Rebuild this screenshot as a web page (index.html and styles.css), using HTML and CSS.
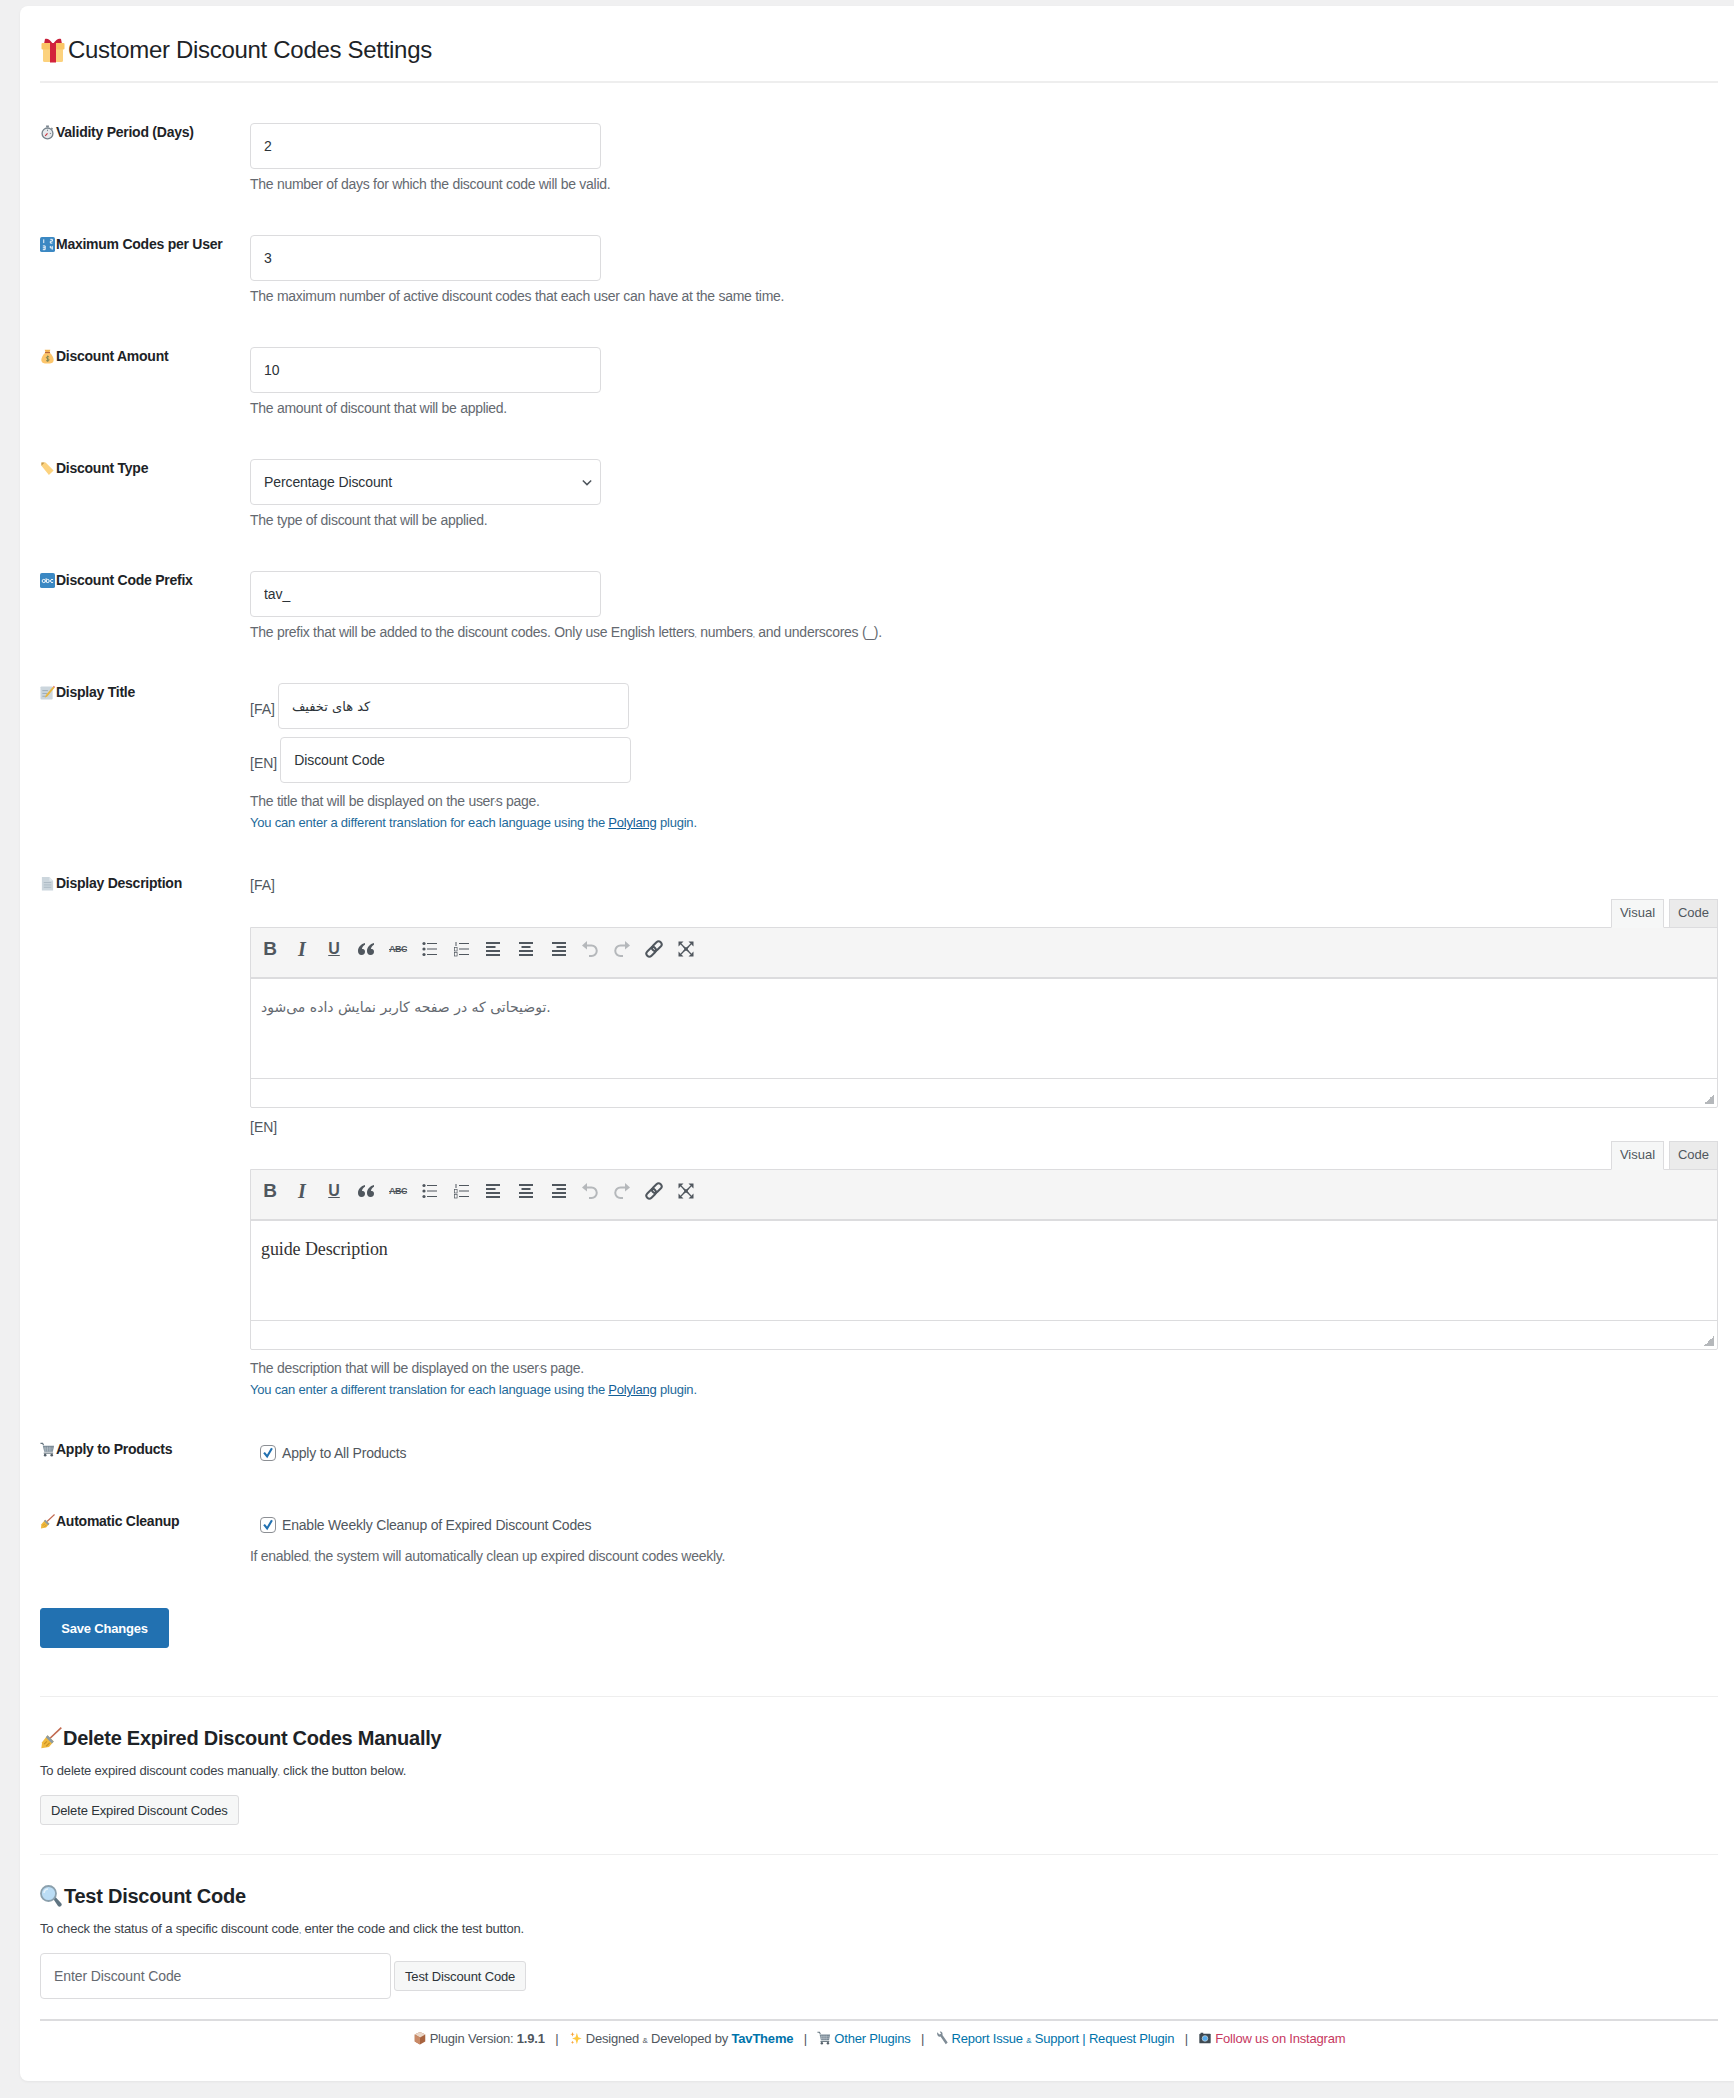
FILE: index.html
```html
<!DOCTYPE html>
<html lang="en">
<head>
  <meta charset="UTF-8" />
  <title>Customer Discount Codes Settings</title>
  <link rel="stylesheet" href="styles.css">
</head>
<body>
  <!-- icon sprite -->
  <svg class="sprite" xmlns="http://www.w3.org/2000/svg">
    <symbol id="i-gift" viewBox="0 0 24 26">
      <path d="M12 7C9 2 6 1 4 2L3 7zM12 7c3-5 6-6 8-5l1 5z" fill="#c8203a"/>
      <rect x="2" y="11" width="20" height="14" rx="1.5" fill="#fcd27e"/>
      <rect x="0.5" y="6" width="23" height="6.500" rx="1" fill="#fbc565"/>
      <rect x="9" y="6" width="6" height="19.500" fill="#d3233c"/>
    </symbol>
    <symbol id="i-watch" viewBox="0 0 16 16">
      <rect x="6.500" y="0.500" width="3" height="2" fill="#7c8790"/>
      <path d="M12 3l1.500 1.500" stroke="#7c8790" stroke-width="1.300"/>
      <circle cx="8" cy="9" r="5.800" fill="#e6e9ec" stroke="#77838c" stroke-width="1.400"/>
      <path d="M8 9 5.500 11.500" stroke="#c8323c" stroke-width="1.200"/>
      <path d="M8 5v1.500M11.800 9h-1.300" stroke="#77838c"/>
    </symbol>
    <symbol id="i-nums" viewBox="0 0 16 16">
      <rect width="16" height="16" rx="2" fill="#3b88c3"/>
      <path d="M4 2.500v4M11 2.500h2.200v2h-2.200v2h2.200M3 9.500h2.500v4H3M5.500 11.500H3M11 9.500v2.200h2.500M13 9.500v4" stroke="#fff" fill="none" stroke-width="1"/>
    </symbol>
    <symbol id="i-bag" viewBox="0 0 16 16">
      <path d="M5.500 4C2.500 7 1 10 1.500 12.500 2 15 4 15.500 8 15.500s6-.5 6.500-3C15 10 13.500 7 10.500 4z" fill="#fcc56b"/>
      <path d="M5 .800h6L10 4H6z" fill="#f2b252"/>
      <rect x="5.300" y="3.200" width="5.400" height="1.200" fill="#b9683e"/>
      <path d="M9.800 8.500C8.800 7.600 6.700 8 6.800 9.300c.1 1.400 3 .9 3 2.300 0 1.300-2.300 1.500-3.400.6M8.200 7v6.500" stroke="#6f7d4e" fill="none" stroke-width=".900"/>
    </symbol>
    <symbol id="i-tag" viewBox="0 0 16 16">
      <path d="M1.500 5V1.500H6l8.500 8.500-5 5z" fill="#fcd27e"/>
      <path d="M1.500 5 5 1.500H1.500z" fill="#c79a4c"/>
    </symbol>
    <symbol id="i-abc" viewBox="0 0 16 16">
      <rect width="16" height="16" rx="2" fill="#3b88c3"/>
      <circle cx="4" cy="8.500" r="1.700" fill="none" stroke="#fff" stroke-width="1"/>
      <circle cx="8.200" cy="8.500" r="1.700" fill="none" stroke="#fff" stroke-width="1"/>
      <path d="M6.500 5.500v4.500M14 7.200a1.700 1.700 0 1 0 0 2.600" stroke="#fff" fill="none" stroke-width="1"/>
    </symbol>
    <symbol id="i-memo" viewBox="0 0 16 16">
      <rect x="0.500" y="1.500" width="13" height="14" rx="1" fill="#ccd6dd"/>
      <path d="M2.500 6h6M2.500 9h5M2.500 12h5" stroke="#99aab5"/>
      <path d="M14 1.500 6.500 10.500 5 13.500 8 12 15.500 3z" fill="#e8b63f"/>
      <path d="M14 1.500l1.500 1.500 .5-.8-1.300-1.400z" fill="#dd5a6a"/>
    </symbol>
    <symbol id="i-page" viewBox="0 0 16 16">
      <path d="M2 1h8l4 4v10.500H2z" fill="#ccd6dd"/>
      <path d="M10 1l4 4h-4z" fill="#e1e8ed"/>
      <path d="M4 7h8M4 9.500h8M4 12h8" stroke="#aab8c2"/>
    </symbol>
    <symbol id="i-cart" viewBox="0 0 16 16">
      <path d="M.5 1.500h2.300l1 2" stroke="#66757f" stroke-width="1.200" fill="none"/>
      <path d="M3 4h12l-1.300 6.500H4.500z" fill="#7a8a96"/>
      <path d="M5.500 5v5M8 5v5M10.500 5v5M4 6.500h10M4.500 8.500h9" stroke="#c3ccd3" stroke-width=".600"/>
      <rect x="4" y="11.300" width="10" height="1.200" fill="#66757f"/>
      <circle cx="5.500" cy="14" r="1.400" fill="#55606a"/>
      <circle cx="12.500" cy="14" r="1.400" fill="#55606a"/>
    </symbol>
    <symbol id="i-broom" viewBox="0 0 16 16">
      <path d="M15.500.5 7.500 8" stroke="#c1694f" stroke-width="1.200"/>
      <path d="M5.500 6 10 10.500 6.500 14.500 1 15.500 1.500 11z" fill="#f0b93c"/>
      <path d="M5.500 6 10 10.500 8.700 12 4.200 7.500z" fill="#8a9aa5"/>
      <path d="M3 12.500 5 10.500M4.500 14 7 11.500" stroke="#c98f22" stroke-width=".800"/>
    </symbol>
    <symbol id="i-search" viewBox="0 0 22 22">
      <path d="M13 13.500 15 11.500 21 18a2 2 0 0 1-3 3z" fill="#5f7481"/>
      <circle cx="8.500" cy="8.500" r="7.500" fill="#bbddf5" stroke="#8ba0ad" stroke-width="1.800"/>
      <path d="M4 8a4.500 4.500 0 0 1 4-4" stroke="#e6f3fb" stroke-width="1.500" fill="none"/>
    </symbol>
    <symbol id="i-box" viewBox="0 0 14 16">
      <path d="M7 1l6 3v8l-6 3.500L1 12V4z" fill="#a8633f"/>
      <path d="M7 1l6 3-6 3.500L1 4z" fill="#ead7c8"/>
      <path d="M1 4l6 3.500v8L1 12z" fill="#c98a67"/>
    </symbol>
    <symbol id="i-spark" viewBox="0 0 14 16">
      <path d="M8 2l1.500 5 4 1.500-4 1.500L8 15 6.500 10l-4-1.500 4-1.500z" fill="#ffc93f"/>
      <path d="M3 1l.7 2 1.800.7-1.800.7L3 6.500l-.7-2.100L.5 3.700l1.800-.7zM3 11l.5 1.400 1.300.6-1.300.5L3 15l-.5-1.500L1.200 13l1.300-.6z" fill="#f7a23b"/>
    </symbol>
    <symbol id="i-wrench" viewBox="0 0 14 16">
      <path d="M1.500 1.500 4 4 6 3 4.500.8C6.500 0 8.200 2 7.500 4.500l6 8.500-2.200 2-6-8.700C3 7.500.8 4.500 1.500 1.500z" fill="#7f8c96"/>
    </symbol>
    <symbol id="i-camera" viewBox="0 0 14 16">
      <rect x="0.500" y="3" width="13" height="11" rx="1" fill="#3f4a52"/>
      <rect x="2" y="2" width="3" height="2" fill="#3f4a52"/>
      <circle cx="7" cy="8.500" r="3.200" fill="#55acee" stroke="#cfd8dd" stroke-width=".800"/>
    </symbol>

    <symbol id="e-quote" viewBox="0 0 20 20"><path d="M9 4C5 5 2 8 2 12c0 2 1 4 3.500 4S9 14.500 9 12.500 7.500 10 6 10c0-2 1.500-3.500 3-4.300zM18 4c-4 1-7 4-7 8 0 2 1 4 3.500 4s3.500-1.500 3.500-3.500S16.500 10 15 10c0-2 1.500-3.500 3-4.300z" fill="#50575e"/></symbol>
    <symbol id="e-ul" viewBox="0 0 20 20"><g fill="#50575e"><circle cx="4" cy="4.500" r="1.600"/><circle cx="4" cy="10" r="1.600"/><circle cx="4" cy="15.500" r="1.600"/><rect x="7" y="4" width="10" height="1"/><rect x="7" y="9.500" width="10" height="1"/><rect x="7" y="15" width="10" height="1"/></g></symbol>
    <symbol id="e-ol" viewBox="0 0 20 20"><g fill="#50575e"><rect x="3.500" y="3" width="1" height="4"/><rect x="2.500" y="8.500" width="2.600" height="3.500" fill="none" stroke="#50575e" stroke-width=".700"/><rect x="2.500" y="13.500" width="2.600" height="3.500" fill="none" stroke="#50575e" stroke-width=".700"/><rect x="7" y="4" width="10" height="1"/><rect x="7" y="9.500" width="10" height="1"/><rect x="7" y="15" width="10" height="1"/></g></symbol>
    <symbol id="e-left" viewBox="0 0 20 20"><g fill="#50575e"><rect x="2" y="3" width="14" height="2"/><rect x="2" y="7" width="9.500" height="2"/><rect x="2" y="11" width="14" height="2"/><rect x="2" y="15" width="14" height="2"/></g></symbol>
    <symbol id="e-center" viewBox="0 0 20 20"><g fill="#50575e"><rect x="3" y="3" width="14" height="2"/><rect x="5.500" y="7" width="9" height="2"/><rect x="3" y="11" width="14" height="2"/><rect x="3" y="15" width="14" height="2"/></g></symbol>
    <symbol id="e-right" viewBox="0 0 20 20"><g fill="#50575e"><rect x="4" y="3" width="14" height="2"/><rect x="8.500" y="7" width="9.500" height="2"/><rect x="4" y="11" width="14" height="2"/><rect x="4" y="15" width="14" height="2"/></g></symbol>
    <symbol id="e-undo" viewBox="0 0 20 20"><path d="M7 2 2 6.500 7 10.500z" fill="#b5b8bb"/><path d="M6 6.500h5.500a5 5 0 0 1 0 10.500H9" fill="none" stroke="#b5b8bb" stroke-width="2"/></symbol>
    <symbol id="e-redo" viewBox="0 0 20 20"><path d="M13 2l5 4.500-5 4z" fill="#b5b8bb"/><path d="M14 6.500H8.500a5 5 0 0 0 0 10.500H11" fill="none" stroke="#b5b8bb" stroke-width="2"/></symbol>
    <symbol id="e-link" viewBox="0 0 20 20"><g transform="rotate(-45 10 10)" fill="none" stroke="#50575e" stroke-width="2"><rect x="0.500" y="7" width="11" height="6" rx="3"/><rect x="8.500" y="7" width="11" height="6" rx="3"/></g></symbol>
    <symbol id="e-full" viewBox="0 0 20 20"><path d="M2.500 2.500h5l-5 5zM17.500 2.500v5l-5-5zM2.500 17.500v-5l5 5zM17.500 17.500h-5l5-5z" fill="#50575e"/><path d="M5 5l10 10M15 5 5 15" stroke="#50575e" stroke-width="1.300"/><path d="M6.500 7 10 8.500 13.500 7 11.500 10l2 3L10 11.500 6.500 13l2-3z" fill="#50575e"/></symbol>
  </svg>

  <div class="card">
    <h1 class="page-title"><svg class="ico-title"><use href="#i-gift"/></svg>Customer Discount Codes Settings</h1>

    <form>
      <div class="row">
        <label class="row-label"><svg class="ico"><use href="#i-watch"/></svg>Validity Period (Days)</label>
        <div>
          <input class="field" type="text" value="2">
          <p class="desc">The number of days for which the discount code will be valid.</p>
        </div>
      </div>

      <div class="row">
        <label class="row-label"><svg class="ico"><use href="#i-nums"/></svg>Maximum Codes per User</label>
        <div>
          <input class="field" type="text" value="3">
          <p class="desc">The maximum number of active discount codes that each user can have at the same time.</p>
        </div>
      </div>

      <div class="row">
        <label class="row-label"><svg class="ico"><use href="#i-bag"/></svg>Discount Amount</label>
        <div>
          <input class="field" type="text" value="10">
          <p class="desc">The amount of discount that will be applied.</p>
        </div>
      </div>

      <div class="row">
        <label class="row-label"><svg class="ico"><use href="#i-tag"/></svg>Discount Type</label>
        <div>
          <select class="field select">
            <option>Percentage Discount</option>
          </select>
          <p class="desc">The type of discount that will be applied.</p>
        </div>
      </div>

      <div class="row">
        <label class="row-label"><svg class="ico"><use href="#i-abc"/></svg>Discount Code Prefix</label>
        <div>
          <input class="field" type="text" value="tav_">
          <p class="desc">The prefix that will be added to the discount codes. Only use English letters<span class="tiny">,</span> numbers<span class="tiny">,</span> and underscores (_).</p>
        </div>
      </div>

      <div class="row">
        <label class="row-label"><svg class="ico"><use href="#i-memo"/></svg>Display Title</label>
        <div>
          <div class="lang-line">
            <span class="lang">[FA]</span>
            <input class="field fa" type="text" value="کد های تخفیف">
          </div>
          <div class="lang-line second">
            <span class="lang">[EN]</span>
            <input class="field" type="text" value="Discount Code">
          </div>
          <p class="desc after-lang">The title that will be displayed on the user<span class="tiny">'</span>s page.</p>
          <p class="note">You can enter a different translation for each language using the <a href="#">Polylang</a> plugin.</p>
        </div>
      </div>

      <div class="row row-editors">
        <label class="row-label"><svg class="ico"><use href="#i-page"/></svg>Display Description</label>
        <div>
          <div class="lang-head">[FA]</div>
          <div class="editor">
            <div class="tabs"><span class="tab active">Visual</span><span class="tab">Code</span></div>
            <div class="box">
              <div class="toolbar">
                <span class="tb tb-b">B</span>
                <span class="tb tb-i">I</span>
                <span class="tb tb-u">U</span>
                <span class="tb"><svg><use href="#e-quote"/></svg></span>
                <span class="tb tb-abc">ABC</span>
                <span class="tb"><svg><use href="#e-ul"/></svg></span>
                <span class="tb"><svg><use href="#e-ol"/></svg></span>
                <span class="tb"><svg><use href="#e-left"/></svg></span>
                <span class="tb"><svg><use href="#e-center"/></svg></span>
                <span class="tb"><svg><use href="#e-right"/></svg></span>
                <span class="tb"><svg><use href="#e-undo"/></svg></span>
                <span class="tb"><svg><use href="#e-redo"/></svg></span>
                <span class="tb"><svg><use href="#e-link"/></svg></span>
                <span class="tb"><svg><use href="#e-full"/></svg></span>
              </div>
              <div class="content content-fa">توضیحاتی که در صفحه کاربر نمایش داده می‌شود.</div>
              <div class="statusbar"><span class="grip"></span></div>
            </div>
          </div>

          <div class="lang-head second">[EN]</div>
          <div class="editor">
            <div class="tabs"><span class="tab active">Visual</span><span class="tab">Code</span></div>
            <div class="box">
              <div class="toolbar">
                <span class="tb tb-b">B</span>
                <span class="tb tb-i">I</span>
                <span class="tb tb-u">U</span>
                <span class="tb"><svg><use href="#e-quote"/></svg></span>
                <span class="tb tb-abc">ABC</span>
                <span class="tb"><svg><use href="#e-ul"/></svg></span>
                <span class="tb"><svg><use href="#e-ol"/></svg></span>
                <span class="tb"><svg><use href="#e-left"/></svg></span>
                <span class="tb"><svg><use href="#e-center"/></svg></span>
                <span class="tb"><svg><use href="#e-right"/></svg></span>
                <span class="tb"><svg><use href="#e-undo"/></svg></span>
                <span class="tb"><svg><use href="#e-redo"/></svg></span>
                <span class="tb"><svg><use href="#e-link"/></svg></span>
                <span class="tb"><svg><use href="#e-full"/></svg></span>
              </div>
              <div class="content content-en">guide Description</div>
              <div class="statusbar"><span class="grip"></span></div>
            </div>
          </div>

          <p class="desc after-editor">The description that will be displayed on the user<span class="tiny">'</span>s page.</p>
          <p class="note">You can enter a different translation for each language using the <a href="#">Polylang</a> plugin.</p>
        </div>
      </div>

      <div class="row row-check">
        <label class="row-label"><svg class="ico"><use href="#i-cart"/></svg>Apply to Products</label>
        <div>
          <label class="check"><input type="checkbox" checked>Apply to All Products</label>
        </div>
      </div>

      <div class="row row-check last">
        <label class="row-label"><svg class="ico"><use href="#i-broom"/></svg>Automatic Cleanup</label>
        <div>
          <label class="check"><input type="checkbox" checked>Enable Weekly Cleanup of Expired Discount Codes</label>
          <p class="desc after-check">If enabled<span class="tiny">,</span> the system will automatically clean up expired discount codes weekly.</p>
        </div>
      </div>

      <button class="btn-primary" type="button">Save Changes</button>
    </form>

    <hr class="sep first">
    <h2 class="sub-title"><svg class="ico-sub"><use href="#i-broom"/></svg>Delete Expired Discount Codes Manually</h2>
    <p class="lead">To delete expired discount codes manually<span class="tiny">,</span> click the button below.</p>
    <button class="btn" type="button">Delete Expired Discount Codes</button>

    <hr class="sep">
    <h2 class="sub-title"><svg class="ico-sub wide"><use href="#i-search"/></svg>Test Discount Code</h2>
    <p class="lead">To check the status of a specific discount code<span class="tiny">,</span> enter the code and click the test button.</p>
    <div class="test-line">
      <input class="field" type="text" placeholder="Enter Discount Code">
      <button class="btn" type="button">Test Discount Code</button>
    </div>

    <div class="foot">
      <span class="foot-item"><svg class="ico-foot"><use href="#i-box"/></svg>Plugin Version: <b>1.9.1</b></span>
      <span class="pipe">|</span>
      <span class="foot-item"><svg class="ico-foot"><use href="#i-spark"/></svg>Designed <span class="tiny">&amp;</span> Developed by <a class="foot-link strong" href="#">TavTheme</a></span>
      <span class="pipe">|</span>
      <a class="foot-item foot-link" href="#"><svg class="ico-foot"><use href="#i-cart"/></svg>Other Plugins</a>
      <span class="pipe">|</span>
      <a class="foot-item foot-link" href="#"><svg class="ico-foot"><use href="#i-wrench"/></svg>Report Issue <span class="tiny">&amp;</span> Support | Request Plugin</a>
      <span class="pipe">|</span>
      <a class="foot-item insta" href="#"><svg class="ico-foot"><use href="#i-camera"/></svg>Follow us on Instagram</a>
    </div>
  </div>
</body>
</html>
```

FILE: styles.css
```css
* {
  box-sizing: border-box;
}

body {
  margin: 0;
  background: #f0f0f1;
  font-family: "Liberation Sans", Arial, "DejaVu Sans", sans-serif;
  font-size: 14px;
  color: #3c434a;
  overflow-x: hidden;
}

.sprite {
  width: 0;
  height: 0;
  position: absolute;
}

.card {
  margin: 6px 0 18px 20px;
  padding: 0 16px 32px 20px;
  background: #fff;
  border-radius: 8px 0 0 8px;
  box-shadow: 0 1px 3px rgba(0, 0, 0, 0.05);
}

.page-title {
  margin: 0 0 25px;
  padding: 27px 0 14px;
  height: 77px;
  display: flex;
  align-items: center;
  font-size: 24px;
  font-weight: 400;
  line-height: 34px;
  letter-spacing: -0.3px;
  color: #1d2327;
  border-bottom: 2px solid #eee;
}

.ico-title {
  width: 26px;
  height: 26px;
  margin-right: 2px;
}

.row {
  display: grid;
  grid-template-columns: 210px 1fr;
  padding: 15px 0 25px;
}

.row-label {
  display: flex;
  align-items: center;
  height: 20px;
  margin-top: -1px;
  font-weight: 700;
  font-size: 14px;
  line-height: 20px;
  letter-spacing: -0.25px;
  color: #1d2327;
}

.ico {
  width: 15px;
  height: 15px;
  margin-right: 1px;
  flex: none;
}

.field {
  width: 351px;
  height: 46px;
  padding: 0 13px;
  border: 1px solid #dcdcde;
  border-radius: 4px;
  background: #fff;
  font-family: "Liberation Sans", "DejaVu Sans", sans-serif;
  font-size: 14px;
  letter-spacing: -0.1px;
  color: #2c3338;
  display: block;
}

.field::placeholder {
  color: #646970;
}

.select {
  appearance: none;
  background: #fff url("data:image/svg+xml,%3Csvg xmlns='http://www.w3.org/2000/svg' viewBox='0 0 12 8'%3E%3Cpath d='M1 1.500l5 5 5-5' fill='none' stroke='%2350575e' stroke-width='1.800'/%3E%3C/svg%3E") no-repeat right 8px center / 10px 7px;
}

.fa {
  font-family: "DejaVu Sans", sans-serif;
  font-size: 13px;
}

.desc {
  margin: 4px 0 0;
  font-size: 14px;
  line-height: 22px;
  letter-spacing: -0.28px;
  color: #646970;
}

.tiny {
  font-size: 8px;
  line-height: 0;
}

.lang-line {
  display: flex;
  align-items: center;
  gap: 3px;
}

.lang-line.second {
  margin-top: 8px;
}

.lang {
  font-size: 14px;
  color: #50575e;
  padding-top: 5px;
}

.after-lang {
  margin-top: 7px;
}

.note {
  margin: 0;
  font-size: 13px;
  line-height: 22px;
  letter-spacing: -0.21px;
  color: #1e6a9a;
}

.note a {
  color: #135e96;
}

.lang-head {
  height: 22px;
  line-height: 22px;
  color: #50575e;
}

.lang-head.second {
  margin-top: 8px;
}

.editor {
  margin-top: 3px;
}

.tabs {
  display: flex;
  justify-content: flex-end;
  gap: 5px;
  height: 29px;
  position: relative;
  z-index: 1;
  margin-bottom: -1px;
}

.tab {
  width: 49px;
  height: 29px;
  line-height: 25px;
  text-align: center;
  font-size: 13px;
  color: #50575e;
  background: #ebebeb;
  border: 1px solid #dcdcde;
}

.tab.active {
  width: 53px;
  background: #f6f7f7;
  border-bottom-color: #f6f7f7;
}

.box {
  border: 1px solid #dcdcde;
  border-radius: 0 0 2px 2px;
}

.toolbar {
  display: flex;
  align-items: center;
  height: 51px;
  padding: 0 0 8px 3px;
  background: #f5f5f5;
  border-bottom: 2px solid #dcdcde;
}

.tb {
  width: 32px;
  height: 20px;
  display: flex;
  justify-content: center;
  align-items: center;
  color: #50575e;
  font-size: 19px;
  line-height: 20px;
}

.tb svg {
  width: 20px;
  height: 20px;
}

.tb-b {
  font-weight: 700;
}

.tb-i {
  font-family: "Liberation Serif", serif;
  font-style: italic;
  font-weight: 700;
  font-size: 20px;
}

.tb-u {
  text-decoration: underline;
  font-size: 16px;
  font-weight: 700;
}

.tb-abc {
  font-size: 9px;
  font-weight: 700;
  letter-spacing: -0.5px;
  text-decoration: line-through;
}

.content {
  height: 99px;
  padding: 16px 10px 0 10px;
  background: #fff;
}

.content-fa {
  font-family: "DejaVu Sans", sans-serif;
  font-size: 14px;
  line-height: 24px;
  color: #646970;
}

.content-en {
  font-family: "Liberation Serif", serif;
  font-size: 18px;
  line-height: 24px;
  letter-spacing: -0.1px;
  color: #333;
}

.statusbar {
  height: 29px;
  border-top: 1px solid #dcdcde;
  position: relative;
}

.grip {
  position: absolute;
  right: 3px;
  bottom: 3px;
  width: 10px;
  height: 10px;
  background: linear-gradient(135deg, transparent 50%, #b5b8bb 50%);
}

.after-editor {
  margin-top: 7px;
}

.row-editors {
  padding-bottom: 24px;
}

.row-check {
  padding: 0;
  height: 72px;
}

.row-check .row-label {
  margin-top: 14px;
}

.row-check.last {
  height: auto;
}

.check {
  display: flex;
  align-items: center;
  height: 20px;
  margin-top: 18px;
  padding-left: 10px;
  letter-spacing: -0.2px;
  color: #50575e;
}

.check input {
  appearance: none;
  width: 16px;
  height: 16px;
  margin: 0 6px 0 0;
  border: 1px solid #8c8f94;
  border-radius: 4px;
  background: #fff url("data:image/svg+xml,%3Csvg xmlns='http://www.w3.org/2000/svg' viewBox='0 0 16 16'%3E%3Cpath d='M3.500 7.500l3.500 4.500 5.500-9.500' fill='none' stroke='%232271b1' stroke-width='2.400'/%3E%3C/svg%3E") no-repeat center / 14px 14px;
}

.after-check {
  margin-top: 10px;
}

.btn-primary {
  display: block;
  width: 129px;
  height: 40px;
  margin-top: 41px;
  border: 1px solid #2271b1;
  border-radius: 3px;
  background: #2271b1;
  color: #fff;
  font-family: "Liberation Sans", sans-serif;
  font-size: 13px;
  font-weight: 700;
  letter-spacing: -0.2px;
}

.sep {
  margin: 29px 0 27px;
  border: 0;
  border-top: 1px solid #eee;
}

.sep.first {
  margin-top: 48px;
}

.sub-title {
  display: flex;
  align-items: center;
  margin: 0;
  height: 28px;
  font-size: 20px;
  font-weight: 700;
  line-height: 28px;
  letter-spacing: -0.25px;
  color: #1d2327;
}

.ico-sub {
  width: 22px;
  height: 22px;
  margin-right: 1px;
}

.ico-sub.wide {
  margin-right: 2px;
}

.lead {
  margin: 9px 0 14px;
  font-size: 13px;
  line-height: 20px;
  letter-spacing: -0.18px;
  color: #3c434a;
}

.btn {
  height: 30px;
  padding: 0 10px;
  border: 1px solid #dcdcde;
  border-radius: 3px;
  background: #f6f7f7;
  color: #2c3338;
  font-family: "Liberation Sans", sans-serif;
  font-size: 13px;
  letter-spacing: -0.14px;
}

.test-line {
  display: flex;
  align-items: center;
  gap: 3px;
}

.foot {
  margin-top: 20px;
  padding-top: 8px;
  border-top: 2px solid #dcdcde;
  text-align: center;
  font-size: 13px;
  line-height: 20px;
  letter-spacing: -0.2px;
  color: #50575e;
}

.foot-item {
  text-decoration: none;
}

.ico-foot {
  width: 14px;
  height: 14px;
  vertical-align: -2px;
  margin-right: 3px;
}

.foot-link {
  color: #0073aa;
  text-decoration: none;
}

.strong {
  font-weight: 700;
}

.insta {
  color: #c7395f;
}

.pipe {
  margin: 0 7px;
}
```
